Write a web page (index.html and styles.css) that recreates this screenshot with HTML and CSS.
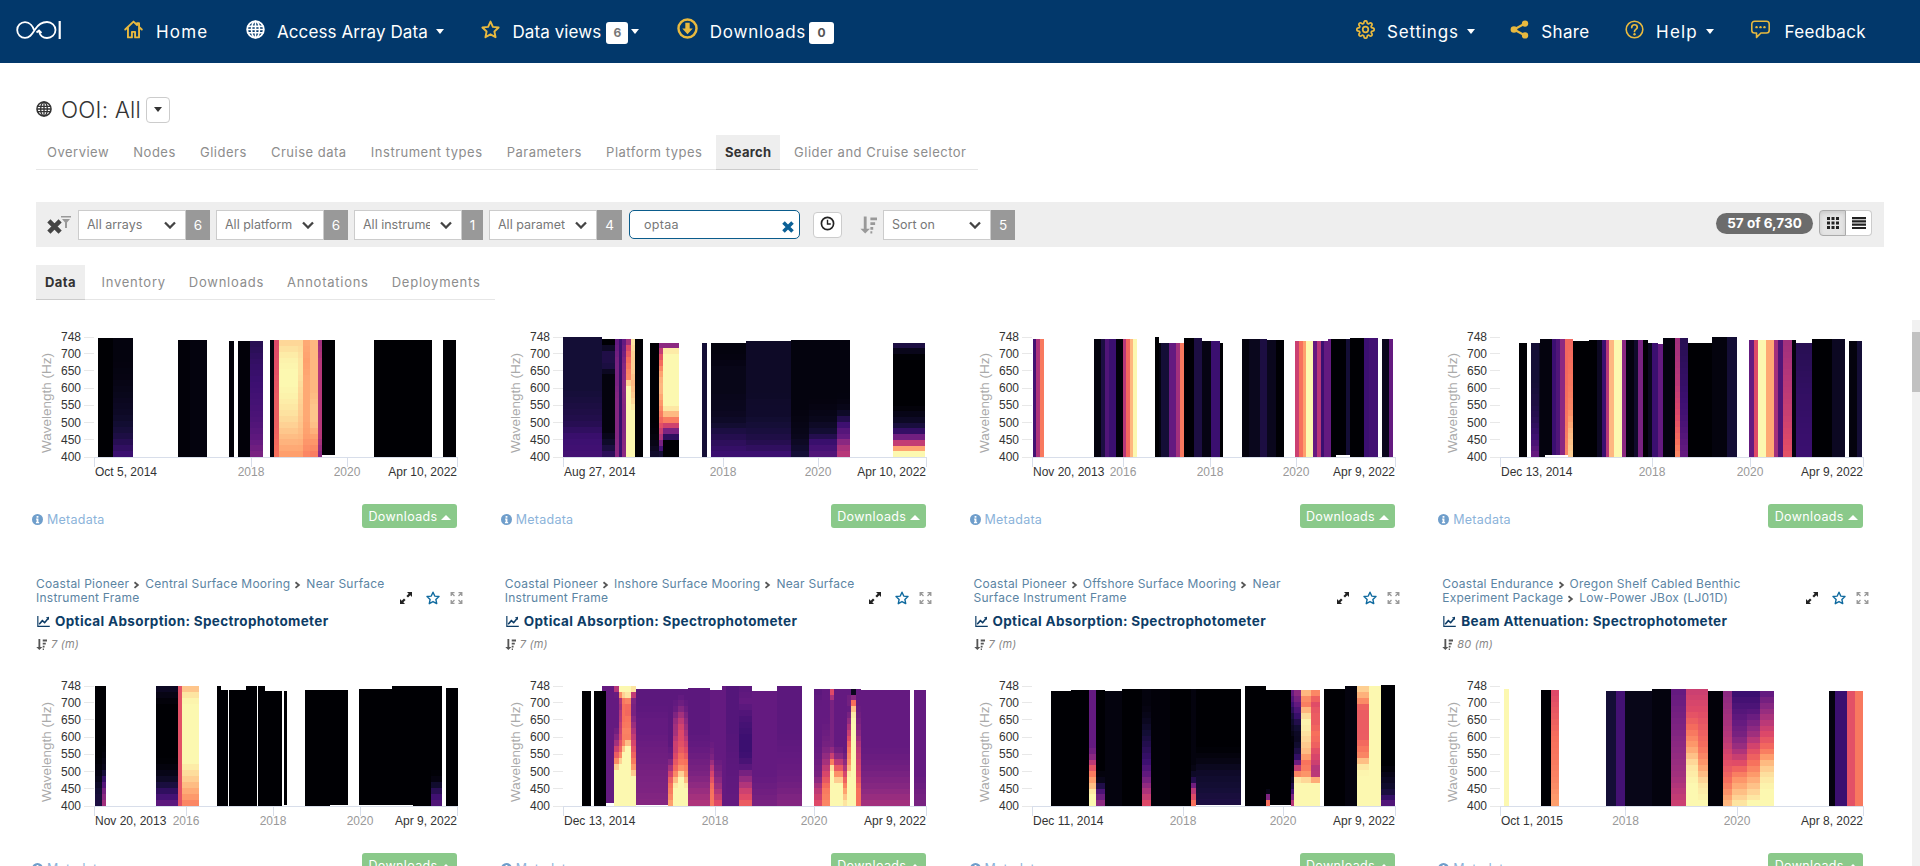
FILE: index.html
```html
<!DOCTYPE html>
<html lang="en">
<head>
<meta charset="utf-8">
<title>OOI: All</title>
<link rel="stylesheet" href="styles.css">
</head>
<body>
<svg class="sprite" aria-hidden="true">
  <symbol id="i-home" viewBox="0 0 24 24"><path fill="none" stroke="currentColor" stroke-width="2.4" stroke-linejoin="round" stroke-linecap="round" d="M1.500 12 12 2l4.500 4.300V4H19v4.700l3.500 3.300M5 9.500V22h5v-7h4v7h5V9.500"/></symbol>
  <symbol id="i-globe" viewBox="0 0 24 24"><g fill="none" stroke="currentColor"><circle cx="12" cy="12" r="10.500" stroke-width="2.400"/><ellipse cx="12" cy="12" rx="5" ry="10.500" stroke-width="2"/><path stroke-width="2" d="M12 2v20M2 8h20M2 16h20M2 12h20"/></g></symbol>
  <symbol id="i-star" viewBox="0 0 24 24"><path fill="none" stroke="currentColor" stroke-width="2.400" stroke-linejoin="round" d="m12 2 3 6.700 7.300.8-5.400 5 1.500 7.200L12 18.100l-6.400 3.600 1.500-7.200-5.400-5 7.300-.8z"/></symbol>
  <symbol id="i-down" viewBox="0 0 24 24"><circle cx="12" cy="12" r="10.300" fill="none" stroke="currentColor" stroke-width="2.800"/><path fill="currentColor" d="M9.500 5.500h5v6.500H18l-6 6.500L6 12h3.500z"/></symbol>
  <symbol id="i-cog" viewBox="0 0 24 24"><g fill="none" stroke="currentColor" stroke-width="2.200"><circle cx="12" cy="12" r="3.500"/><path d="M19.400 15a1.650 1.650 0 0 0 .33 1.820l.06.06a2 2 0 0 1 0 2.830 2 2 0 0 1-2.830 0l-.06-.06a1.650 1.650 0 0 0-1.820-.33 1.650 1.650 0 0 0-1 1.510V21a2 2 0 0 1-2 2 2 2 0 0 1-2-2v-.09A1.650 1.650 0 0 0 9 19.400a1.650 1.650 0 0 0-1.820.33l-.06.06a2 2 0 0 1-2.830 0 2 2 0 0 1 0-2.830l.06-.06a1.650 1.650 0 0 0 .33-1.820 1.650 1.650 0 0 0-1.510-1H3a2 2 0 0 1-2-2 2 2 0 0 1 2-2h.09A1.650 1.650 0 0 0 4.600 9a1.650 1.650 0 0 0-.33-1.820l-.06-.06a2 2 0 0 1 0-2.830 2 2 0 0 1 2.830 0l.06.06a1.650 1.650 0 0 0 1.820.33H9a1.650 1.650 0 0 0 1-1.510V3a2 2 0 0 1 2-2 2 2 0 0 1 2 2v.09a1.650 1.650 0 0 0 1 1.510 1.650 1.650 0 0 0 1.820-.33l.06-.06a2 2 0 0 1 2.830 0 2 2 0 0 1 0 2.830l-.06.06a1.650 1.650 0 0 0-.33 1.820V9a1.650 1.650 0 0 0 1.510 1H21a2 2 0 0 1 2 2 2 2 0 0 1-2 2h-.09a1.650 1.650 0 0 0-1.510 1z"/></g></symbol>
  <symbol id="i-share" viewBox="0 0 24 24"><g fill="currentColor"><circle cx="19" cy="4.500" r="4"/><circle cx="5" cy="12" r="4.200"/><circle cx="19" cy="19.500" r="4"/></g><path fill="none" stroke="currentColor" stroke-width="2.800" d="M19 4.500 5 12l14 7.500"/></symbol>
  <symbol id="i-help" viewBox="0 0 24 24"><circle cx="12" cy="12" r="10.500" fill="none" stroke="currentColor" stroke-width="2"/><path fill="none" stroke="currentColor" stroke-width="2.200" stroke-linecap="round" d="M8.500 9.500C8.500 7 10 6 12 6s3.500 1.200 3.500 3.200c0 2.800-3.500 2.500-3.500 5.300"/><circle cx="12" cy="18" r="1.500" fill="currentColor"/></symbol>
  <symbol id="i-chat" viewBox="0 0 24 24"><path fill="none" stroke="currentColor" stroke-width="2" stroke-linejoin="round" d="M4.500 1.500h15a3.500 3.500 0 0 1 3.500 3.500v8a3.500 3.500 0 0 1-3.500 3.500h-7L7 22v-5.500H4.500A3.500 3.500 0 0 1 1 13V5a3.500 3.500 0 0 1 3.500-3.500z"/><g fill="currentColor"><circle cx="7" cy="9" r="1.500"/><circle cx="12" cy="9" r="1.500"/><circle cx="17" cy="9" r="1.500"/></g></symbol>
  <symbol id="i-chev" viewBox="0 0 12 12"><path fill="none" stroke="currentColor" stroke-width="2.400" d="m2 3 4.500 3.700L2 10.500"/></symbol>
  <symbol id="i-select" viewBox="0 0 12 8"><path fill="none" stroke="currentColor" stroke-width="2.300" d="m1 1.500 5 5 5-5"/></symbol>
  <symbol id="i-x" viewBox="0 0 12 12"><path fill="none" stroke="currentColor" stroke-width="3.600" d="m1.500 1.500 9 9m0-9-9 9"/></symbol>
  <symbol id="i-clock" viewBox="0 0 16 16"><circle cx="8" cy="8" r="6.500" fill="none" stroke="currentColor" stroke-width="1.800"/><path fill="none" stroke="currentColor" stroke-width="1.500" d="M8 4v4.500h3.500"/></symbol>
  <symbol id="i-sort" viewBox="0 0 18 18"><path fill="currentColor" d="M4 0h3v13h3.500L5.500 18 .5 13H4zM11 1h7v3h-7zM11 6h5v3h-5zM11 11h3v3h-3zM11 15.500h2V18h-2z"/></symbol>
  <symbol id="i-grid" viewBox="0 0 14 14"><path fill="currentColor" d="M1 1h3v3H1zM5.500 1h3v3h-3zM10 1h3v3h-3zM1 5.500h3v3H1zM5.500 5.500h3v3h-3zM10 5.500h3v3h-3zM1 10h3v3H1zM5.500 10h3v3h-3zM10 10h3v3h-3z"/></symbol>
  <symbol id="i-list" viewBox="0 0 14 14"><path fill="currentColor" d="M0 1h14v2.200H0zM0 4.300h14v2.200H0zM0 7.600h14v2.200H0zM0 10.900h14v2.200H0z"/></symbol>
  <symbol id="i-expand" viewBox="0 0 12 12"><path fill="currentColor" d="M7 0h5v5l-1.700-1.700L8 5.600 6.400 4l2.300-2.300zM5 12H0V7l1.700 1.700L4 6.400 5.600 8 3.300 10.300z"/></symbol>
  <symbol id="i-full" viewBox="0 0 12 12"><path fill="none" stroke="currentColor" stroke-width="1.300" d="M.7 4V.7H4M.7.7 4 4M8 .7h3.300V4M11.300.7 8 4M11.300 8v3.300H8M11.300 11.300 8 8M4 11.300H.7V8M.7 11.300 4 8"/></symbol>
  <symbol id="i-line" viewBox="0 0 16 14"><path fill="none" stroke="currentColor" stroke-width="1.500" d="M.8 0v13.200H16"/><path fill="none" stroke="currentColor" stroke-width="2" d="m2.500 10.500 4-4.500 3 2.500 4-5"/><path fill="currentColor" d="m11 2 4-1v4z"/></symbol>
  <symbol id="i-info" viewBox="0 0 12 12"><circle cx="6" cy="6" r="6" fill="currentColor"/><path fill="#fff" d="M5 2.200h2v1.800H5zM4.500 5h2.500v3.800h.8V10H4.300V8.800H5V6.200h-.5z"/></symbol>
</svg>

<div class="page">
  <header class="nav">
    <svg class="logo" viewBox="0 0 46 18" aria-label="OOI logo">
      <g fill="none" stroke="#fff" stroke-width="1.800">
        <path d="M19 9C18 6 15 1.200 10 1.200A7.800 7.800 0 0 0 10 16.800C15 16.800 17 13 20 8.500C22.500 4.500 26 1 32 1A8.500 8 0 0 1 32 17C28 17 25 14 24 10.500"/>
        <path d="M21.500 11.500 24 9.500l2.500 2.500"/>
        <path d="M44.700 0v18" stroke-width="2.200"/>
      </g>
    </svg>
    <nav class="nav-group nav-main">
      <a class="nav-item"><svg class="nav-ic ic-home"><use href="#i-home"/></svg><span class="lb-wide">Home</span></a>
      <a class="nav-item"><svg class="nav-ic ic-white"><use href="#i-globe"/></svg><span>Access Array Data</span><i class="caret"></i></a>
      <a class="nav-item"><svg class="nav-ic"><use href="#i-star"/></svg><span>Data views</span><b class="count">6</b><i class="caret caret-tight"></i></a>
      <a class="nav-item"><svg class="nav-ic ic-wide"><use href="#i-down"/></svg><span class="lb-down">Downloads</span><b class="count count-wide">0</b></a>
    </nav>
    <nav class="nav-group nav-side">
      <a class="nav-item"><svg class="nav-ic"><use href="#i-cog"/></svg><span class="lb-set">Settings</span><i class="caret"></i></a>
      <a class="nav-item"><svg class="nav-ic"><use href="#i-share"/></svg><span class="lb-share">Share</span></a>
      <a class="nav-item"><svg class="nav-ic"><use href="#i-help"/></svg><span class="lb-wide">Help</span><i class="caret"></i></a>
      <a class="nav-item"><svg class="nav-ic ic-chat"><use href="#i-chat"/></svg><span class="lb-share">Feedback</span></a>
    </nav>
  </header>

  <section class="top">
    <div class="title-row">
      <svg class="title-globe"><use href="#i-globe"/></svg>
      <h1>OOI: All</h1>
      <button class="caret-btn"><i class="caret caret-dark"></i></button>
    </div>
    <ul class="tabs tabs-main">
      <li>Overview</li><li>Nodes</li><li>Gliders</li><li>Cruise data</li><li>Instrument types</li><li>Parameters</li><li>Platform types</li><li class="active">Search</li><li>Glider and Cruise selector</li>
    </ul>
    <div class="filters">
      <svg class="clear-ic" viewBox="0 0 25 18">
        <use href="#i-x" x="0" y="3" width="17" height="15" class="clear-x"/>
        <path class="clear-f" d="M15 0h10v1.500H15zM16 3h8l-3 3.500V12h-2V6.500z"/>
      </svg>
      <div class="sel"><div class="sel-box"><span class="sel-text">All arrays</span><svg class="chev"><use href="#i-select"/></svg></div><span class="sel-n">6</span></div>
      <div class="sel"><div class="sel-box"><span class="sel-text">All platforms</span><svg class="chev"><use href="#i-select"/></svg></div><span class="sel-n">6</span></div>
      <div class="sel"><div class="sel-box"><span class="sel-text">All instruments</span><svg class="chev"><use href="#i-select"/></svg></div><span class="sel-n sel-n-sm">1</span></div>
      <div class="sel"><div class="sel-box"><span class="sel-text">All parameters</span><svg class="chev"><use href="#i-select"/></svg></div><span class="sel-n sel-n-lg">4</span></div>
      <div class="search"><input class="search-in" type="text" value="optaa" aria-label="Search"><svg class="search-x"><use href="#i-x"/></svg></div>
      <button class="clock-btn"><svg class="clock-ic"><use href="#i-clock"/></svg></button>
      <svg class="sort-ic"><use href="#i-sort"/></svg>
      <div class="sel"><div class="sel-box"><span class="sel-text sel-text-wide">Sort on</span><svg class="chev"><use href="#i-select"/></svg></div><span class="sel-n">5</span></div>
      <span class="pill">57 of 6,730</span>
      <div class="toggle">
        <button class="tog tog-on"><svg class="tog-ic"><use href="#i-grid"/></svg></button>
        <button class="tog"><svg class="tog-ic"><use href="#i-list"/></svg></button>
      </div>
    </div>
    <ul class="tabs tabs-sub">
      <li class="active">Data</li><li>Inventory</li><li>Downloads</li><li>Annotations</li><li>Deployments</li>
    </ul>
  </section>

  <div class="scroller">
    <main class="cards">
      <article class="card card-first"><svg class="chart" data-chart="0"></svg><footer class="card-foot"><a class="meta"><svg class="meta-ic"><use href="#i-info"/></svg>Metadata</a><button class="dl">Downloads<i class="caret caret-up"></i></button></footer></article>
      <article class="card card-first"><svg class="chart" data-chart="1"></svg><footer class="card-foot"><a class="meta"><svg class="meta-ic"><use href="#i-info"/></svg>Metadata</a><button class="dl">Downloads<i class="caret caret-up"></i></button></footer></article>
      <article class="card card-first"><svg class="chart" data-chart="2"></svg><footer class="card-foot"><a class="meta"><svg class="meta-ic"><use href="#i-info"/></svg>Metadata</a><button class="dl">Downloads<i class="caret caret-up"></i></button></footer></article>
      <article class="card card-first"><svg class="chart" data-chart="3"></svg><footer class="card-foot"><a class="meta"><svg class="meta-ic"><use href="#i-info"/></svg>Metadata</a><button class="dl">Downloads<i class="caret caret-up"></i></button></footer></article>

      <article class="card">
        <div class="card-head"><p class="crumbs">Coastal Pioneer<svg class="sep"><use href="#i-chev"/></svg>Central Surface Mooring<svg class="sep"><use href="#i-chev"/></svg>Near Surface<br>Instrument Frame</p><div class="tools"><svg class="t-exp"><use href="#i-expand"/></svg><svg class="t-star"><use href="#i-star"/></svg><svg class="t-full"><use href="#i-full"/></svg></div></div>
        <h3 class="card-title"><svg class="title-ic"><use href="#i-line"/></svg>Optical Absorption: Spectrophotometer</h3>
        <p class="depth"><svg class="depth-ic"><use href="#i-sort"/></svg>7 (m)</p>
        <svg class="chart chart-low" data-chart="4"></svg><footer class="card-foot"><a class="meta"><svg class="meta-ic"><use href="#i-info"/></svg>Metadata</a><button class="dl">Downloads<i class="caret caret-up"></i></button></footer>
      </article>
      <article class="card">
        <div class="card-head"><p class="crumbs">Coastal Pioneer<svg class="sep"><use href="#i-chev"/></svg>Inshore Surface Mooring<svg class="sep"><use href="#i-chev"/></svg>Near Surface<br>Instrument Frame</p><div class="tools"><svg class="t-exp"><use href="#i-expand"/></svg><svg class="t-star"><use href="#i-star"/></svg><svg class="t-full"><use href="#i-full"/></svg></div></div>
        <h3 class="card-title"><svg class="title-ic"><use href="#i-line"/></svg>Optical Absorption: Spectrophotometer</h3>
        <p class="depth"><svg class="depth-ic"><use href="#i-sort"/></svg>7 (m)</p>
        <svg class="chart chart-low" data-chart="5"></svg><footer class="card-foot"><a class="meta"><svg class="meta-ic"><use href="#i-info"/></svg>Metadata</a><button class="dl">Downloads<i class="caret caret-up"></i></button></footer>
      </article>
      <article class="card">
        <div class="card-head"><p class="crumbs">Coastal Pioneer<svg class="sep"><use href="#i-chev"/></svg>Offshore Surface Mooring<svg class="sep"><use href="#i-chev"/></svg>Near<br>Surface Instrument Frame</p><div class="tools"><svg class="t-exp"><use href="#i-expand"/></svg><svg class="t-star"><use href="#i-star"/></svg><svg class="t-full"><use href="#i-full"/></svg></div></div>
        <h3 class="card-title"><svg class="title-ic"><use href="#i-line"/></svg>Optical Absorption: Spectrophotometer</h3>
        <p class="depth"><svg class="depth-ic"><use href="#i-sort"/></svg>7 (m)</p>
        <svg class="chart chart-low" data-chart="6"></svg><footer class="card-foot"><a class="meta"><svg class="meta-ic"><use href="#i-info"/></svg>Metadata</a><button class="dl">Downloads<i class="caret caret-up"></i></button></footer>
      </article>
      <article class="card">
        <div class="card-head"><p class="crumbs">Coastal Endurance<svg class="sep"><use href="#i-chev"/></svg>Oregon Shelf Cabled Benthic<br>Experiment Package<svg class="sep"><use href="#i-chev"/></svg>Low-Power JBox (LJ01D)</p><div class="tools"><svg class="t-exp"><use href="#i-expand"/></svg><svg class="t-star"><use href="#i-star"/></svg><svg class="t-full"><use href="#i-full"/></svg></div></div>
        <h3 class="card-title"><svg class="title-ic"><use href="#i-line"/></svg>Beam Attenuation: Spectrophotometer</h3>
        <p class="depth"><svg class="depth-ic"><use href="#i-sort"/></svg>80 (m)</p>
        <svg class="chart chart-low" data-chart="7"></svg><footer class="card-foot"><a class="meta"><svg class="meta-ic"><use href="#i-info"/></svg>Metadata</a><button class="dl">Downloads<i class="caret caret-up"></i></button></footer>
      </article>
    </main>
    <div class="rail"><div class="thumb"></div></div>
  </div>
</div>
<script src="charts.js"></script>
</body>
</html>
```
FILE: styles.css
```css
* { box-sizing: border-box; }
html, body { margin: 0; height: 866px; overflow: hidden; background: #fff; }
body { font-family: Inter, "Open Sans", sans-serif; color: #333; }
.sprite { display: none; }
.page { display: flex; flex-direction: column; height: 866px; }
ul { list-style: none; margin: 0; padding: 0; }
p, h1, h3 { margin: 0; }
button { font-family: inherit; }

/* nav */
.nav { flex: none; height: 63px; background: #02386b; display: flex; align-items: center; padding: 0 54px 0 15px; color: #fff; }
.logo { width: 46px; height: 18px; margin-top: -3px; flex: none; }
.nav-group { display: flex; align-items: center; gap: 37.500px; }
.nav-main { margin-left: 62px; }
.nav-side { margin-left: auto; gap: 35.500px; }
.nav-item { display: flex; align-items: center; font-size: 17px; letter-spacing: .1px; white-space: nowrap; }
.lb-wide { letter-spacing: 1.200px; }
.lb-down { letter-spacing: .75px; }
.lb-set { letter-spacing: .85px; }
.lb-share { letter-spacing: .35px; }
.nav-ic { width: 19px; height: 19px; margin-right: 12px; color: #e8b93f; margin-top: -4px; flex: none; }
.ic-home { width: 21px; }
.ic-white { color: #fff; }
.ic-wide { width: 21px; height: 21px; margin-right: 12px; margin-top: -6px; }
.ic-chat { width: 23px; }
.caret { display: inline-block; width: 0; height: 0; margin-left: 8px; border-left: 4.500px solid transparent; border-right: 4.500px solid transparent; border-top: 5px solid #fff; }
.caret-tight { margin-left: 3px; }
.caret-dark { margin: 0; border-top-color: #333; }
.caret-up { margin-left: 4px; border-top: 0; border-bottom: 5px solid #fff; border-left-width: 5px; border-right-width: 5px; vertical-align: 1px; }
.count { display: inline-block; margin: 2px 0 0 5px; width: 22px; height: 22px; line-height: 22px; border-radius: 3px; background: #fff; color: #777; font-size: 12px; font-weight: 700; text-align: center; letter-spacing: 0; }
.count-wide { width: 25px; margin-left: 3px; color: #555; }

/* top */
.top { flex: none; padding: 33px 36px 0; }
.title-row { display: flex; align-items: center; height: 26px; }
.title-globe { width: 16px; height: 16px; color: #333; margin-right: 9px; }
h1 { font-size: 22.500px; font-weight: 300; letter-spacing: .2px; color: #333; margin-right: 5px; }
.caret-btn { width: 24px; height: 26px; margin-top: 1px; padding: 0; background: #fff; border: 1px solid #ccc; border-radius: 4px; display: flex; align-items: center; justify-content: center; }
.tabs { display: flex; border-bottom: 1px solid #e6e6e6; color: #8d8d8d; font-size: 13px; letter-spacing: .5px; }
.tabs li { padding: 0 12.100px; line-height: 34px; white-space: nowrap; }
.tabs .active { background: #eee; color: #333; font-weight: 700; border-bottom: 1px solid #ccc; margin-bottom: -1px; }
.tabs-main { margin-top: 13px; width: 942px; height: 35px; }
.tabs-main .active { padding: 0 9px; margin: 0 1.500px -1px; letter-spacing: .3px; }
.tabs-sub { margin-top: 18px; width: 459px; height: 35px; letter-spacing: .75px; }
.tabs-sub li { padding: 0 11.500px; }
.tabs-sub .active { padding: 0 9px; margin-right: 5px; letter-spacing: .4px; }
.tabs-main li:first-child { padding-left: 11px; }

/* filter bar */
.filters { display: flex; align-items: center; height: 45px; margin-top: 32px; background: #eee; padding: 0 12px 0 10px; }
.clear-ic { width: 25px; height: 18px; margin-right: 7px; flex: none; }
.clear-x { color: #444; }
.clear-f { fill: #999; }
.sel { display: flex; height: 30px; margin-right: 6px; flex: none; }
.sel-box { width: 108px; display: flex; align-items: center; justify-content: space-between; padding: 0 9px 0 8px; background: #fff; border: 1px solid #ccc; font-size: 12.500px; color: #777; }
.sel-text { width: 67px; overflow: hidden; white-space: nowrap; }
.sel-text-wide { width: auto; }
.chev { width: 12px; height: 8px; color: #444; flex: none; }
.sel-n { width: 24px; background: #999; color: #fff; font-size: 13.500px; text-align: center; line-height: 30px; }
.sel-n-sm { width: 21px; }
.sel-n-lg { width: 25px; }
.search { position: relative; width: 171px; height: 29px; margin-left: 1px; flex: none; }
.search-in { width: 100%; height: 100%; padding: 0 30px 0 14px; border: 1px solid #0a5c8c; border-radius: 5px; font: 12.500px Inter, sans-serif; letter-spacing: .3px; color: #777; background: #fff; outline: 0; }
.search-x { position: absolute; right: 6px; top: 11px; width: 12px; height: 12px; color: #0b6096; }
.clock-btn { width: 29px; height: 26px; margin-left: 13px; padding: 0; background: #fff; border: 1px solid #ccc; border-radius: 4px; display: flex; align-items: center; justify-content: center; flex: none; }
.clock-ic { width: 15px; height: 15px; color: #222; margin-top: -3px; }
.sort-ic { width: 17px; height: 18px; margin: 0 6px 0 18px; color: #999; flex: none; }
.pill { margin-left: auto; height: 21px; line-height: 21px; width: 97px; text-align: center; background: #6c6c6c; border-radius: 11px; color: #fff; font-size: 13.500px; font-weight: 700; margin-top: -3px; flex: none; }
.toggle { display: flex; margin-left: 6px; height: 26px; margin-top: -4px; flex: none; }
.tog { width: 26px; padding: 0; border: 1px solid #ccc; background: #fff; display: flex; align-items: center; justify-content: center; }
.tog:last-child { border-left: 0; border-radius: 0 4px 4px 0; }
.tog-on { width: 27px; background: #e4e4e4; border-radius: 4px 0 0 4px; box-shadow: inset 0 2px 4px rgba(0,0,0,.12); border-color: #aaa; }
.tog-ic { width: 14px; height: 14px; color: #222; }

/* cards */
.scroller { flex: 1; min-height: 0; margin-top: 20px; display: flex; overflow: hidden; }
.cards { width: 1875px; margin-left: 24px; margin-right: 13px; padding-top: 7px; display: grid; grid-template-columns: repeat(4, 468.750px); grid-auto-rows: max-content; }
.card { min-width: 0; padding-top: 49px; }
.card-first { padding-top: 0; }
.chart { display: block; width: 469px; height: 155px; }
.chart-low { margin-top: 24px; }
.card-foot { display: flex; align-items: center; justify-content: space-between; width: 433px; padding-left: 8px; margin-top: 22px; height: 24px; }
.meta { display: flex; align-items: center; color: #8bb3da; font-size: 12.500px; letter-spacing: .25px; margin-top: 6px; }
.meta-ic { width: 11px; height: 11px; color: #6f9ecb; margin-right: 4px; }
.dl { width: 95px; height: 24px; padding: 0 0 0 1px; background: #8ac98a; border: 0; border-radius: 3px; color: #fff; font-size: 12.500px; letter-spacing: .35px; }
.card-head { display: flex; justify-content: space-between; align-items: flex-end; padding: 0 30px 0 12px; height: 28px; }
.crumbs { font-size: 12px; line-height: 14px; color: #5b84a3; letter-spacing: .25px; white-space: nowrap; }
.sep { width: 9px; height: 9px; color: #555; margin: 0 3px 0 4px; vertical-align: -1px; }
.tools { display: flex; align-items: center; height: 14px; }
.t-exp { width: 12px; height: 12px; color: #222; }
.t-star { width: 14px; height: 14px; margin: 0 10px 0 14px; color: #0f6a9f; }
.t-full { width: 13px; height: 12px; color: #999; }
.card-title { display: flex; align-items: center; height: 18px; margin: 7px 0 0 12px; font-size: 13.500px; font-weight: 700; color: #0d3c66; letter-spacing: .35px; }
.title-ic { width: 15px; height: 11px; margin-right: 4px; }
.depth { display: flex; align-items: center; height: 16px; margin: 6px 0 0 12px; font-size: 11px; font-style: italic; color: #888; letter-spacing: .2px; }
.depth-ic { width: 11px; height: 11px; color: #555; margin-right: 4px; }
.rail { width: 8px; flex: none; background: #f1f1f1; padding-top: 12px; }
.thumb { height: 60px; background: #c1c1c1; }
.ax { font: 12px "Liberation Sans", Arial, sans-serif; }
.ax-dark { fill: #333; }
.ax-year { fill: #999; }
.ax-title { font: 13.500px "Liberation Sans", Arial, sans-serif; fill: #aaa; }
```
FILE: charts.js
```js
var STOPS = ['#000004','#140e36','#3b0f70','#641a80','#8c2981','#b73779','#de4968','#f76f5c','#fe9f6d','#fecf92','#fcf8b0'];
function hex(c){return [parseInt(c.slice(1,3),16),parseInt(c.slice(3,5),16),parseInt(c.slice(5,7),16)];}
function magma(v){
  v=Math.max(0,Math.min(1,v))*10;
  var i=Math.min(9,Math.floor(v)),f=v-i,a=hex(STOPS[i]),b=hex(STOPS[i+1]);
  return 'rgb('+[0,1,2].map(function(k){return Math.round(a[k]+(b[k]-a[k])*f);}).join(',')+')';
}
var R1=[52,411], R2=[380,738];
var CHARTS=[
{zl:222,zr:1310,sx:3,r:R1,first:'Oct 5, 2014',last:'Apr 10, 2022',years:[['2018',157],['2020',253]],cols:[
[233,280,55,[0]],[280,340,55,[.02,.02,.03,.05,.07,.12,.2]],[473,510,61,[.01]],[510,560,61,[.02]],[628,643,65,[.01]],[654,690,65,[.01]],
[690,729,65,[.15,.18,.2,.22,.24,.28,.35]],[751,762,61,[.02]],[762,776,61,[.6,.62,.65,.66,.7]],[776,835,61,[.92,.98,1,1,.98,.95,.9,.85,.8]],
[835,850,61,[.92,.95,.95,.92,.9,.88,.85,.8]],[850,870,61,[.82,.8,.82,.82,.82,.8,.75]],[870,895,61,[.85,.85,.85,.85,.88,.88,.8,.73]],[895,906,61,[.45,.5,.5,.5,.5,.5,.4]],
[906,944,61,[0],405],[1063,1236,61,[0]],[1268,1309,61,[0]]]},
{zl:217,zr:1306,sx:3,r:R1,first:'Aug 27, 2014',last:'Apr 10, 2022',years:[['2018',160],['2020',255]],cols:[
[217,335,52,[.1,.1,.1,.1,.12,.14,.2,.22]],[335,372,58,[0,.13,.13,.02,.02,.02,.02,.02,.02,.08,.16]],[372,386,58,[.3,.35,.35,.38,.38,.38,.4]],[386,395,58,[.2,.18,.2]],
[395,407,58,[.3,.38,.4,.38,.38,.4]],[407,421,58,[.45,.6,.65,.7,.72,.75,.75,1,1,1,1,1,1,1,1,1,1,1,1]],[421,432,58,[.95,.9,.9,.85,.9,1,1,1,1]],[432,458,58,[0]],
[479,505,69,[0,0,0,0,0,0,.02,.08]],[505,516,69,[.4,.6,.7,.8,.85,.85,.8,.75,.7,.6,.5,.3,.1]],[516,566,69,[.4,1,1,1,1,1,1,1,1,1,1,.9,.78,.62,.4,.2,0,0,0]],
[634,649,69,[.1]],[660,765,69,[.02,.02,.03,.04,.04,.04,.04,.05,.05,.06,.08,.12,.15,.18,.2]],[765,900,65,[.07,.07,.07,.07,.07,.07,.08,.08,.1,.12,.15,.2]],
[900,955,61,[.02,.02,.02,.02,.02,.03,.05,.1]],[955,1040,61,[.02,.02,.02,.02,.02,.02,.03,.05,.1,.2,.25]],[1040,1078,61,[.02,.02,.02,.02,.02,.02,.02,.03,.05,.15,.25,.3,.45,.5]],
[1208,1302,69,[.12,.04,0,0,0,0,0,0,0,0,0,.03,.05,.1,.15,.3,.5,.8,1]]]},
{zl:214,zr:1300,sx:3,r:R1,first:'Nov 20, 2013',last:'Apr 9, 2022',years:[['2016',91],['2018',178],['2020',264]],cols:[
[217,227,58,[.22]],[227,238,58,[.48]],[238,249,58,[.72]],[400,420,58,[.02]],[420,432,58,[.12]],[432,445,58,[.25]],[445,465,58,[.2]],[465,486,58,[.01]],[486,497,58,[.5]],[497,507,58,[.68]],[507,518,58,[.85]],[518,529,58,[1]],
[584,594,52,[0]],[594,600,69,[.02]],[600,626,69,[.1]],[626,645,69,[.3]],[645,658,69,[.45]],[658,670,69,[.72]],[670,700,55,[0]],[700,723,55,[.12]],[723,750,65,[.03]],[750,778,65,[.2]],[778,788,69,[0]],
[843,865,58,[.02]],[865,897,58,[.05]],[897,918,58,[.12]],[918,945,61,[.05]],[945,971,61,[0]],
[1004,1015,65,[.55]],[1015,1026,65,[.7]],[1026,1036,65,[.8]],[1036,1058,65,[1]],[1058,1068,65,[.3]],[1068,1080,65,[.5]],[1080,1090,65,[.2]],[1090,1101,65,[.3]],[1101,1112,58,[.3]],[1112,1125,58,[0]],[1125,1165,58,[0],405],[1155,1167,58,[.1],405],[1167,1210,55,[0]],[1210,1225,55,[.2]],[1225,1252,55,[.22]],[1263,1285,58,[.05]],[1285,1298,58,[.3]]]},
{zl:210,zr:1297,sx:3,r:R1,first:'Dec 13, 2014',last:'Apr 9, 2022',years:[['2018',152],['2020',250]],cols:[
[268,292,69,[0]],[304,328,69,[.1,.1,.1,.12,.15,.2,.3]],[328,340,69,[.06]],[329,344,58,[.02]],[344,365,58,[.02],405],[365,378,58,[.2],405],[378,390,58,[.25],405],[390,404,58,[.4],405],[404,415,58,[.68,.68,.7,.72,.75],405],[415,428,58,[.68,.7,.72,.75,.85,.9]],
[428,477,65,[0]],[477,500,61,[0]],[500,515,61,[.06]],[515,527,61,[.2]],[527,538,61,[.5]],[538,553,61,[.85]],[553,577,61,[1]],[577,588,61,[.4]],[588,612,61,[.02]],[612,625,61,[.08]],[625,638,61,[.35]],[638,653,61,[0]],[653,665,69,[.05]],[665,685,69,[.2]],[685,698,72,[.3]],[698,735,55,[.02]],[735,750,55,[.45,.5,.6,.75]],[750,775,55,[.15,.18,.22,.3]],
[775,847,69,[0]],[847,890,52,[.02]],[890,922,52,[.1]],[958,972,61,[.3]],[972,983,61,[.6]],[983,1008,61,[1]],[1008,1033,61,[.82]],[1033,1045,61,[.45]],[1045,1060,61,[.25]],[1060,1085,61,[.45,.5,.55,.62]],[1085,1098,61,[.02]],[1098,1145,69,[.15,.18,.2]],[1145,1205,58,[0]],[1205,1245,58,[.06]],[1257,1280,65,[.02]],[1280,1296,65,[.1]]]},
{zl:217,zr:1309,sx:3,r:R2,first:'Nov 20, 2013',last:'Apr 9, 2022',years:[['2016',92],['2018',179],['2020',266]],cols:[
[220,240,381,[0,0,0,0,0,0,0,.02,.05,.1,.12]],[240,252,381,[0,0,0,0,0,0,.02,.05,.2,.35,.45]],[404,468,381,[.06,.02,0,0,0,0,0,0,0,.02,.05,.12,.2,.28]],[468,480,381,[.62]],[480,533,381,[.88,.98,1,1,1,1,1,1,1,1,.95,.9,.85,.8,.75]],
[587,598,381,[0]],[598,618,392,[0]],[623,673,392,[0]],[673,706,381,[0]],[710,731,381,[0]],[731,782,396,[0]],[786,796,396,[0],734],[851,926,392,[0]],[926,980,392,[0],734],[1013,1110,388,[0],734],[1110,1175,381,[0],734],[1175,1228,381,[0]],[1228,1261,381,[0,0,0,0,0,0,0,0,0,0,0,.02,.1,.2,.25]],[1272,1308,385,[0]]]},
{zl:214,zr:1306,sx:3,r:R2,first:'Dec 13, 2014',last:'Apr 9, 2022',years:[['2018',152],['2020',251]],cols:[
[271,297,396,[0]],[307,343,396,[0]],[332,343,381,[.3],396],[343,368,381,[.3],730],
[368,382,381,[.5,.3,.3,.3,.3,.3,.3,.35,.4,.5,.62,.7,.85,1,1,1,1,1,1]],
[382,391,381,[1,.75,.45,.45,.5,.5,.55,.55,.6,.65,.7,.85,1,1,1,1,1,1,1]],
[391,400,381,[1,.9,.7,.7,.7,.7,.72,.75,.72,.78,1,1,1,1,1,1,1,1,1]],
[400,418,381,[1,.95,.72,.68,.68,.72,.72,.75,.72,1,1,1,1,1,1,1,1,1,1]],
[418,433,381,[.95,.5,.35,.35,.35,.4,.45,.5,.55,.6,.65,.7,.75,.85,1,1,1,1,1]],
[433,530,388,[.28,.28,.3,.3,.32,.33,.35,.36,.38],735],
[530,545,388,[.28,.28,.28,.28,.28,.28,.28,.28,.28,.3,.32,.4,.5,.62,.7,.72,.75,.8]],
[545,560,388,[.28,.28,.3,.32,.4,.45,.45,.5,.55,.55,.6,.65,.7,.8,.95,1,1,1]],
[560,578,388,[.28,.3,.33,.4,.5,.55,.6,.6,.62,.65,.7,.72,.8,1,1,1,1,1]],
[578,590,388,[.28,.28,.3,.33,.38,.42,.45,.5,.55,.6,.65,.72,.75,.8,.95,1,1,1]],
[590,655,385,[.28,.28,.28,.28,.3,.33,.36,.42,.48]],[655,668,392,[.3,.3,.3,.3,.35,.55,.7,.72]],[668,692,392,[.3,.3,.3,.3,.3,.35,.45,.6]],[692,702,381,[.3]],[702,742,381,[.26,.26,.28,.3]],[742,782,381,[.28,.3,.25,.22,.2,.2,.25,.4,.55,.65]],[782,855,396,[.3,.3,.3,.3,.35]],[855,930,381,[.28,.28,.28,.3,.32,.38]],
[967,990,388,[.28,.3,.3,.3,.3,.32,.35,.5,.6]],[990,1016,388,[.3,.3,.3,.32,.35,.45,.6,.72,.75]],[1016,1028,388,[.6,.35,.35,.35,.35,.35,.6,1,1,1,1]],[1028,1053,388,[.3,.3,.3,.3,.3,.3,.3,.4,.6,.8,1,1,1]],[1053,1065,388,[.3,.3,.3,.3,.3,.3,.45,.65,.8,.95]],[1065,1078,388,[.3,.35,.3,.4,.5,.6,.7,.75,.8,1,1,1,1]],[1078,1092,388,[.05,.65,.95,1,1,1,1,1,1,1,1,1]],[1092,1107,388,[.3,.3,.35,.4,.5,.55,.6,.7,.7]],
[1107,1255,392,[.3,.3,.3,.3,.33,.38,.45]],[1266,1302,392,[.3,.3,.3,.3,.35]]]},
{zl:115,zr:708,sx:1.633,r:R2,first:'Dec 11, 2014',last:'Apr 9, 2022',years:[['2018',151],['2020',251]],cols:[
[146,178,396,[0]],[178,208,392,[0]],[208,220,392,[.3,.3,.3,.3,.3,.3,.3,.4,.6,.75,.85,1,1]],[220,235,392,[0,0,0,0,0,0,0,0,.05,.25,.4]],[235,262,396,[.02]],[262,295,388,[0]],[295,310,388,[.02,.02,.05,.1,.15,.2,.3,.45,.6]],[310,340,388,[.01]],[340,375,388,[0]],[375,383,388,[.02,.02,.02,.02,.02,.02,.02,.1,.5,.7]],[383,457,388,[0,0,0,0,0,.03,.08,.1,.12],735],
[463,497,381,[0]],[497,503,392,[0,0,0,0,0,0,0,0,0,.7]],[503,538,392,[0],735],[538,543,392,[.3,.2,.1,.05,0,0,0,.05,.2,.5]],[543,555,392,[.4,.3,.2,.1,.05,.1,.2,.6,1,1,1]],[555,570,392,[.85,.7,.9,1,.95,.9,.85,.7,.75,1,1,1]],[570,585,392,[.75,.6,.65,.65,.7,.68,.6,.55,.45,1,1,1]],
[592,626,388,[0]],[626,645,381,[.02]],[645,665,381,[.9,.8,.65,.65,.65,.65,.7,.75,.95,1,1,1,1]],[665,685,381,[1]],[685,708,378,[0,0,0,0,0,0,0,.05,.1,.25]]]},
{zl:881,zr:1473,sx:1.633,r:R2,first:'Oct 1, 2015',last:'Apr 8, 2022',years:[['2018',125.5],['2020',237]],cols:[
[888,895,388,[1]],[948,965,392,[0]],[965,978,392,[.6,.65,.7,.72,.75,.8]],
[1054,1070,396,[.1]],[1070,1085,396,[.22]],[1085,1130,396,[.04]],[1130,1160,388,[.02]],[1160,1185,388,[.3,.35,.4,.45,.55]],[1185,1205,388,[.55,.6,.7,.8,.95,1,1]],[1205,1220,388,[.55,.6,.65,.7,.8,.95,1]],
[1220,1245,396,[.01]],[1245,1260,396,[.4,.45,.5,.6,.7,.85]],[1260,1285,396,[.2,.25,.3,.35,.45,.6,.75,.85,.95]],[1285,1305,396,[.2,.25,.35,.45,.6,.7,.8,.9,1]],[1305,1328,396,[.3,.4,.5,.6,.7,.85,.95,1,1]],
[1418,1428,396,[.02]],[1428,1448,396,[.2]],[1448,1460,396,[.62]],[1460,1473,396,[.72]]]}
];
var NS='http://www.w3.org/2000/svg';
function el(parent,tag,attrs,text){
  var e=document.createElementNS(NS,tag);
  for(var k in attrs)e.setAttribute(k,attrs[k]);
  if(text!==undefined)e.textContent=text;
  parent.appendChild(e);
  return e;
}
function render(svg,c){
  var L=70,T=10,W=363,H=120,B=T+H;
  svg.setAttribute('viewBox','0 0 469 155');
  var zH=c.r[1]-c.r[0];
  var cells=el(svg,'g',{'shape-rendering':'crispEdges'});
  c.cols.forEach(function(col){
    var x0=L+(col[0]-c.zl)/c.sx, x1=L+(col[1]-c.zl)/c.sx;
    var top=(col[2]-c.r[0])/zH*H, bot=col[4]?(col[4]-c.r[0])/zH*H:H;
    var vals=col[3];
    if(vals.length===1){
      el(cells,'rect',{x:x0,y:T+top,width:x1-x0,height:bot-top,fill:magma(vals[0])});
      return;
    }
    var n=Math.max(1,Math.ceil((bot-top)/6)), h=(bot-top)/n;
    for(var i=0;i<n;i++){
      var t=n===1?0:i/(n-1)*(vals.length-1), a=Math.floor(t), b=Math.min(vals.length-1,a+1);
      var v=vals[a]+(vals[b]-vals[a])*(t-a);
      el(cells,'rect',{x:x0,y:T+top+i*h,width:x1-x0,height:h+.5,fill:magma(v)});
    }
  });
  var axes=el(svg,'g',{'shape-rendering':'crispEdges'});
  el(axes,'line',{x1:L,y1:B+.5,x2:L+W,y2:B+.5,stroke:'#d8deea'});
  [0,W].concat(c.years.map(function(y){return y[1];})).forEach(function(p){
    el(axes,'line',{x1:L+p,y1:B,x2:L+p,y2:B+10,stroke:'#d8deea'});
  });
  [748,700,650,600,550,500,450,400].forEach(function(v){
    var y=T+(748-v)/348*H;
    el(axes,'line',{x1:L-10,y1:y,x2:L,y2:y,stroke:'#e8e8e8'});
    el(svg,'text',{x:L-13,y:y+4,'text-anchor':'end','class':'ax ax-dark'},String(v));
  });
  el(svg,'text',{x:L+1,y:B+19,'class':'ax ax-dark'},c.first);
  el(svg,'text',{x:L+W,y:B+19,'text-anchor':'end','class':'ax ax-dark'},c.last);
  c.years.forEach(function(y){el(svg,'text',{x:L+y[1],y:B+19,'text-anchor':'middle','class':'ax ax-year'},y[0]);});
  var cy=T+66;
  el(svg,'text',{x:27,y:cy,'text-anchor':'middle','class':'ax-title',transform:'rotate(-90 27 '+cy+')'},'Wavelength (Hz)');
}
document.querySelectorAll('.chart').forEach(function(s){render(s,CHARTS[+s.getAttribute('data-chart')]);});
```
